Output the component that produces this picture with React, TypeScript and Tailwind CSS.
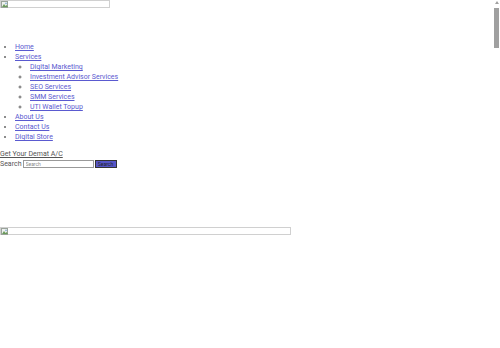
import React from 'react';

function BrokenImg({ w }: { w: number }) {
  return (
    <div className="relative h-[8px] border border-[#d0d0d0]" style={{ width: w }}>
      <svg className="absolute left-0 top-0" width="8" height="7" viewBox="0 0 8 7">
        <rect x="0.5" y="0.5" width="6" height="6" fill="#eef1ee" stroke="#9aa39a" strokeWidth="1" />
        <path d="M1 6 L3 3 L4.5 5 L5.5 4 L7 6 Z" fill="#6b9a5c" />
        <circle cx="5" cy="2.3" r="0.9" fill="#8ab0d8" />
      </svg>
    </div>
  );
}

const linkCls = 'text-[#5a5ad0] underline';

export default function App() {
  return (
    <div className="min-h-[2800px] bg-white text-[7px] leading-[10px] text-[#555] font-['Roboto',sans-serif]">
      <BrokenImg w={110} />

      <ul className="list-disc pl-[15px] mt-[34px] text-[#666]">
        <li><a className={linkCls}>Home</a></li>
        <li>
          <a className={linkCls}>Services</a>
          <ul className="list-[circle] pl-[15px]">
            <li><a className={linkCls}>Digital Marketing</a></li>
            <li><a className={linkCls}>Investment Advisor Services</a></li>
            <li><a className={linkCls}>SEO Services</a></li>
            <li><a className={linkCls}>SMM Services</a></li>
            <li><a className={linkCls}>UTI Wallet Topup</a></li>
          </ul>
        </li>
        <li><a className={linkCls}>About Us</a></li>
        <li><a className={linkCls}>Contact Us</a></li>
        <li><a className={linkCls}>Digital Store</a></li>
      </ul>

      <div className="mt-[7px]">
        <a className="text-[#555] underline">Get Your Demat A/C</a>
      </div>
      <form className="flex items-center h-[10px]">
        <label className="text-[#555]">Search</label>
        <input
          placeholder="Search"
          className="ml-[1px] w-[71px] h-[8px] border border-[#999] bg-white px-[2px] text-[5px] leading-[6px] placeholder:text-[#888] outline-none"
        />
        <button type="button" className="ml-[1px] w-[22px] h-[8px] bg-[#5656c8] border border-[#333] text-[5px] leading-[6px] text-[#222]">
          Search
        </button>
      </form>

      <div className="mt-[58px]">
        <BrokenImg w={291} />
      </div>

      {/* page scrollbar */}
      <div className="fixed right-0 top-0 h-[348px] w-[7px] bg-white">
        <div className="mx-auto mt-[1px] h-0 w-0 border-x-[2px] border-b-[3px] border-x-transparent border-b-[#a0a0a0]" />
        <div className="mx-auto mt-[4px] h-[40px] w-[5px] bg-[#a0a0a0]" />
      </div>
    </div>
  );
}
